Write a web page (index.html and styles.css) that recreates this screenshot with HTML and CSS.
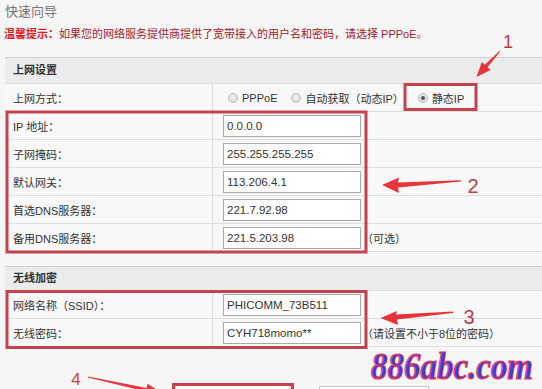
FILE: index.html
```html
<!DOCTYPE html>
<html lang="zh-CN">
<head>
<meta charset="utf-8">
<title>快速向导</title>
<link rel="stylesheet" href="styles.css">
</head>
<body>
<div class="page">
  <div class="title">快速向导</div>
  <div class="tip"><span class="tip-key">温馨提示：</span>如果您的网络服务提供商提供了宽带接入的用户名和密码，请选择 PPPoE。</div>

  <div class="section">
    <div class="sec-head">上网设置</div>
    <div class="row">
      <div class="label">上网方式：</div>
      <div class="value radios">
        <span class="opt"><span class="radio"></span>PPPoE</span>
        <span class="opt"><span class="radio"></span>自动获取（动态IP）</span>
        <span class="opt"><span class="radio checked"></span>静态IP</span>
      </div>
    </div>
    <div class="row">
      <div class="label">IP 地址：</div>
      <div class="value"><input class="field" type="text" value="0.0.0.0"></div>
    </div>
    <div class="row">
      <div class="label">子网掩码：</div>
      <div class="value"><input class="field" type="text" value="255.255.255.255"></div>
    </div>
    <div class="row">
      <div class="label">默认网关：</div>
      <div class="value"><input class="field" type="text" value="113.206.4.1"></div>
    </div>
    <div class="row">
      <div class="label">首选DNS服务器：</div>
      <div class="value"><input class="field" type="text" value="221.7.92.98"></div>
    </div>
    <div class="row">
      <div class="label">备用DNS服务器：</div>
      <div class="value"><input class="field" type="text" value="221.5.203.98"><span class="hint">（可选）</span></div>
    </div>
  </div>

  <div class="section section2">
    <div class="sec-head sec-head2">无线加密</div>
    <div class="row">
      <div class="label">网络名称（SSID）：</div>
      <div class="value"><input class="field" type="text" value="PHICOMM_73B511"></div>
    </div>
    <div class="row">
      <div class="label">无线密码：</div>
      <div class="value"><input class="field" type="text" value="CYH718momo**"><span class="hint">（请设置不小于8位的密码）</span></div>
    </div>
  </div>

  <div class="actions">
    <button class="btn btn-main" type="button" aria-label="下一步"></button>
    <button class="btn btn-sub" type="button" aria-label="返回"></button>
  </div>

  <svg class="overlay" width="542" height="389" viewBox="0 0 542 389" xmlns="http://www.w3.org/2000/svg">
    <g fill="none" stroke="#c4424c" stroke-width="3">
      <rect x="405" y="84.5" width="71" height="25"/>
      <rect x="7" y="112" width="359" height="140"/>
      <rect x="7" y="291.5" width="359" height="56"/>
      <rect x="173.5" y="384.5" width="119" height="20"/>
    </g>
    <g fill="#e5343a">
      <polygon points="500.4,51.3 499.6,50.7 484.9,64.8 481.8,61.9 476.5,77 490.6,70.1 487.5,67.2"/>
      <polygon points="461,180.2 461,181.6 398,187.5 399,193 382,185 399,177.5 398,182.5"/>
      <polygon points="453,311.6 453,313 397,319.5 398,325 380.5,318 397,311 396,314.5"/>
      <polygon points="87.9,377.6 88.1,376.4 146.7,387.9 147.5,383.8 162,393 145.1,395.6 145.9,391.5"/>
    </g>
    <g class="num" fill="#b5404d">
      <text x="508" y="48" font-size="18" text-anchor="middle">1</text>
      <text x="473" y="193" font-size="20" text-anchor="middle">2</text>
      <text x="469" y="324" font-size="20" text-anchor="middle">3</text>
      <text x="76" y="385" font-size="17" text-anchor="middle" fill="#d24040">4</text>
    </g>
    <text class="mark" x="371" y="379" font-size="38" textLength="162" lengthAdjust="spacingAndGlyphs" fill="#2f44ee" stroke="#f03848" stroke-width="1.2">886abc.com</text>
  </svg>
</div>
</body>
</html>
```
FILE: styles.css
```css
* { box-sizing: border-box; }
html, body { margin: 0; padding: 0; }
body {
  background: #f6f6f6;
  font-family: "Liberation Sans", "Noto Sans CJK SC", sans-serif;
  font-size: 11px;
  color: #333;
  width: 542px;
  height: 389px;
  overflow: hidden;
}
.page { position: relative; width: 542px; height: 389px; overflow: hidden; }
.title {
  height: 22px;
  padding: 2px 0 0 5px;
  line-height: 20px;
  font-size: 13px;
  color: #777;
}
.tip {
  margin-top: 2px;
  height: 20px;
  line-height: 20px;
  padding-left: 4px;
  color: #a2182c;
  white-space: nowrap;
}
.tip-key { color: #d8201f; font-weight: bold; }

.section {
  margin: 13px 0 0 5px;
  border-top: 1px solid #cfcfcf;
  border-bottom: 1px solid #dedede;
  background: #f8f8f8;
}
.section2 { margin-top: 14px; }
.sec-head {
  height: 25px;
  line-height: 25px;
  padding-left: 8px;
  background: #ebebeb;
  font-weight: bold;
  color: #333;
}
.sec-head2 { height: 23px; line-height: 23px; }
.row {
  display: flex;
  height: 28px;
  border-top: 1px solid #dedede;
}
.label {
  width: 208px;
  flex: none;
  padding-left: 8px;
  display: flex;
  align-items: center;
  border-right: 1px solid #dcdcdc;
  white-space: nowrap;
}
.value {
  flex: 1;
  display: flex;
  align-items: center;
  padding-left: 10px;
}
.radios { padding-left: 15px; gap: 14px; }
.opt { display: flex; align-items: center; gap: 4px; white-space: nowrap; }
.radio {
  width: 10px;
  height: 10px;
  border-radius: 50%;
  border: 1px solid #bdbdbd;
  background: radial-gradient(circle at 50% 40%, #f2f2f2 0, #d2d2d2 100%);
  position: relative;
}
.radio.checked::after {
  content: "";
  position: absolute;
  left: 2px;
  top: 2px;
  width: 4px;
  height: 4px;
  border-radius: 50%;
  background: #555;
}
.field {
  width: 138px;
  height: 22px;
  border: 1px solid #a9a9a9;
  background: #fff;
  padding: 0 3px;
  font-family: "Liberation Sans", "Noto Sans CJK SC", sans-serif;
  font-size: 11.5px;
  color: #333;
  margin: 0;
}
.hint { margin-left: 1px; white-space: nowrap; }

.actions {
  display: flex;
  margin-top: 37px;
  padding-left: 175px;
  gap: 29px;
}
.btn {
  height: 24px;
  border: 1px solid #c8c8c8;
  background: #fdfdfd;
  padding: 0;
}
.btn-main { width: 115px; }
.btn-sub { width: 110px; margin-top: 2px; }

.overlay { position: absolute; left: 0; top: 0; pointer-events: none; }
.num { font-family: "Liberation Sans", sans-serif; }
.mark { font-family: "Liberation Serif", serif; font-style: italic; font-weight: bold; }
```
